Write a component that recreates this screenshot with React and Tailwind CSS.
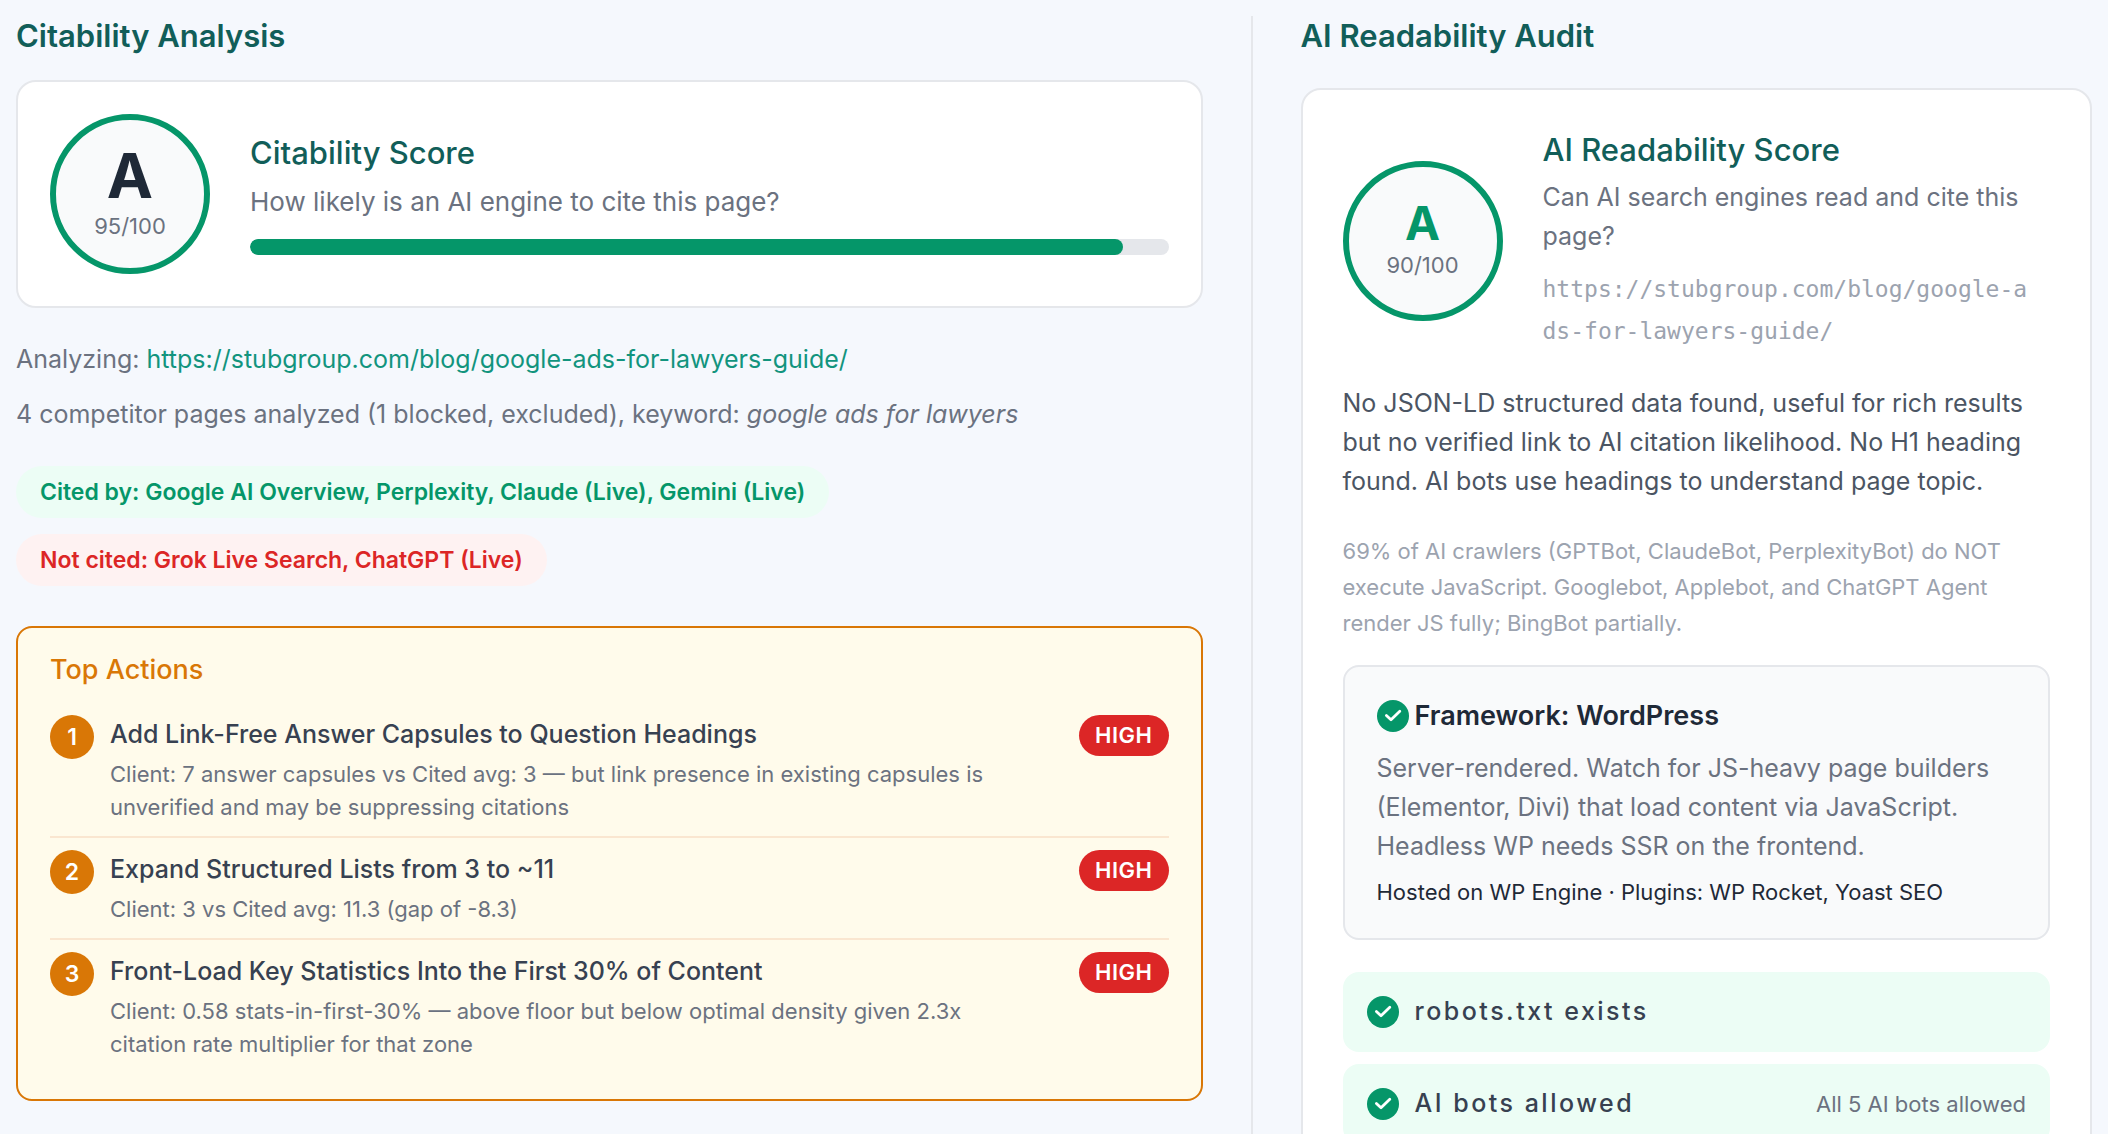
import React from "react";

const PAGE_URL = "https://stubgroup.com/blog/google-ads-for-lawyers-guide/";

const topActions = [
  {
    title: "Add Link-Free Answer Capsules to Question Headings",
    detail:
      "Client: 7 answer capsules vs Cited avg: 3 — but link presence in existing capsules is unverified and may be suppressing citations",
    priority: "HIGH",
  },
  {
    title: "Expand Structured Lists from 3 to ~11",
    detail: "Client: 3 vs Cited avg: 11.3 (gap of -8.3)",
    priority: "HIGH",
  },
  {
    title: "Front-Load Key Statistics Into the First 30% of Content",
    detail:
      "Client: 0.58 stats-in-first-30% — above floor but below optimal density given 2.3x citation rate multiplier for that zone",
    priority: "HIGH",
  },
];

const checks = [
  { label: "robots.txt exists", note: "" },
  { label: "AI bots allowed", note: "All 5 AI bots allowed" },
];

function CheckIcon() {
  return (
    <svg viewBox="0 0 32 32" className="size-8 shrink-0" aria-hidden="true">
      <circle cx="16" cy="16" r="16" fill="#059669" />
      <path
        d="M9.4 15.4 L14 19.8 L22.8 11.2"
        fill="none"
        stroke="#fff"
        strokeWidth="2.8"
        strokeLinecap="round"
        strokeLinejoin="round"
      />
    </svg>
  );
}

function ScoreCircle({ grade, score, gradeClass }) {
  return (
    <div className="flex size-40 shrink-0 flex-col items-center justify-center rounded-full border-6 border-[#059669] bg-[#f9fafb]">
      <span className={gradeClass}>{grade}</span>
      <span className="text-[22px] leading-9 text-[#6b7280]">{score}/100</span>
    </div>
  );
}

function CitabilityAnalysis() {
  const score = 95;

  return (
    <section>
      <h2 className="mb-6 text-[31px] leading-10 font-semibold text-[#115e59]">
        Citability Analysis
      </h2>

      {/* Score card */}
      <div className="flex items-center gap-10 rounded-[20px] border-2 border-[#e5e7eb] bg-white p-8">
        <ScoreCircle
          grade="A"
          score={score}
          gradeClass="text-[62px] leading-16 font-bold text-[#1f2937]"
        />
        <div className="flex-1">
          <h3 className="mb-2 text-[31px] leading-10 font-medium text-[#115e59]">
            Citability Score
          </h3>
          <p className="mb-4 text-[26px] leading-[42px] text-[#6b7280]">
            How likely is an AI engine to cite this page?
          </p>
          <div className="h-4 overflow-hidden rounded-full bg-[#e5e7eb]">
            <div
              className="h-full rounded-full bg-[#059669]"
              style={{ width: `${score}%` }}
            />
          </div>
        </div>
      </div>

      <p className="mt-8 mb-4 text-[25px] leading-[39px] text-[#6b7280]">
        Analyzing:{" "}
        <a href={PAGE_URL} className="text-[#12947e]">
          {PAGE_URL}
        </a>
      </p>
      <p className="mb-8 text-[25px] leading-[39px] text-[#6b7280]">
        4 competitor pages analyzed (1 blocked, excluded), keyword:{" "}
        <em>google ads for lawyers</em>
      </p>

      <div className="mb-10 flex flex-col items-start gap-4 text-[23px] leading-9 font-semibold">
        <span className="rounded-full bg-[#ecfdf5] px-6 py-2 text-[#059669]">
          Cited by: Google AI Overview, Perplexity, Claude (Live), Gemini (Live)
        </span>
        <span className="rounded-full bg-[#fef2f2] px-6 py-2 text-[#dc2626]">
          Not cited: Grok Live Search, ChatGPT (Live)
        </span>
      </div>

      {/* Top actions */}
      <div className="rounded-2xl border-2 border-[#d97706] bg-[#fffbeb] px-8 pt-6 pb-[26px]">
        <h3 className="mb-[15px] text-[27px] leading-9 font-medium text-[#d97706]">
          Top Actions
        </h3>
        <ol className="divide-y-2 divide-[#fae6d0]">
          {topActions.map((action, i) => (
            <li key={action.title} className="flex items-start gap-4 py-3">
              <span className="flex size-11 shrink-0 items-center justify-center rounded-full bg-[#d97706] text-[23px] font-semibold text-white">
                {i + 1}
              </span>
              <div className="flex-1 pr-12">
                <h4 className="mb-1 text-[25px] leading-[39px] font-medium text-[#374151]">
                  {action.title}
                </h4>
                <p className="text-[22px] leading-[33px] text-[#6b7280]">
                  {action.detail}
                </p>
              </div>
              <span className="rounded-full bg-[#dc2626] px-4 py-1 text-[22px] leading-[33px] font-semibold tracking-wide text-white">
                {action.priority}
              </span>
            </li>
          ))}
        </ol>
      </div>
    </section>
  );
}

function ReadabilityAudit() {
  return (
    <section className="border-l-2 border-[#e5e7eb] pl-12">
      <h2 className="mb-8 text-[31px] leading-10 font-semibold text-[#115e59]">
        AI Readability Audit
      </h2>

      <div className="rounded-[20px] border-2 border-[#e5e7eb] bg-white p-10">
        <div className="mb-8 flex items-center gap-10">
          <ScoreCircle
            grade="A"
            score={90}
            gradeClass="text-[47px] leading-12 font-bold text-[#059669]"
          />
          <div className="flex-1">
            <h3 className="mb-2 text-[31px] leading-10 font-medium text-[#115e59]">
              AI Readability Score
            </h3>
            <p className="text-[25px] leading-[39px] text-[#6b7280]">
              Can AI search engines read and cite this page?
            </p>
            <p className="mt-3 pr-4 font-['DejaVu_Sans_Mono',monospace] text-[23px] leading-[42px] break-all text-[#9ca3af]">
              {PAGE_URL}
            </p>
          </div>
        </div>

        <p className="mb-8 text-[25px] leading-[39px] text-[#4b5563]">
          No JSON-LD structured data found, useful for rich results but no
          verified link to AI citation likelihood. No H1 heading found. AI bots
          use headings to understand page topic.
        </p>
        <p className="mb-6 text-[22px] leading-9 text-[#9ca3af]">
          69% of AI crawlers (GPTBot, ClaudeBot, PerplexityBot) do NOT execute
          JavaScript. Googlebot, Applebot, and ChatGPT Agent render JS fully;
          BingBot partially.
        </p>

        {/* Detected framework */}
        <div className="mb-8 rounded-2xl border-2 border-[#e5e7eb] bg-[#f9fafb] px-8 py-7">
          <h4 className="mb-3 flex items-center gap-1.5 text-[27px] leading-[42px] font-semibold text-[#1f2937]">
            <CheckIcon />
            Framework: WordPress
          </h4>
          <p className="mb-2 text-[25px] leading-[39px] text-[#6b7280]">
            Server-rendered. Watch for JS-heavy page builders (Elementor, Divi)
            that load content via JavaScript. Headless WP needs SSR on the
            frontend.
          </p>
          <p className="text-[22px] leading-9 text-[#1f2937]">
            Hosted on WP Engine · Plugins: WP Rocket, Yoast SEO
          </p>
        </div>

        <ul className="flex flex-col gap-3">
          {checks.map((check) => (
            <li
              key={check.label}
              className="flex h-20 items-center gap-4 rounded-2xl bg-[#ecfdf5] px-6"
            >
              <CheckIcon />
              <span className="flex-1 text-[25px] font-medium tracking-widest text-[#374151]">
                {check.label}
              </span>
              <span className="text-[22px] text-[#6b7280]">{check.note}</span>
            </li>
          ))}
        </ul>
      </div>
    </section>
  );
}

export default function App() {
  return (
    <main className="grid min-h-screen grid-cols-[1.41fr_1fr] gap-12 bg-[#f5f8fd] p-4 font-['Inter',sans-serif]">
      <CitabilityAnalysis />
      <ReadabilityAudit />
    </main>
  );
}
